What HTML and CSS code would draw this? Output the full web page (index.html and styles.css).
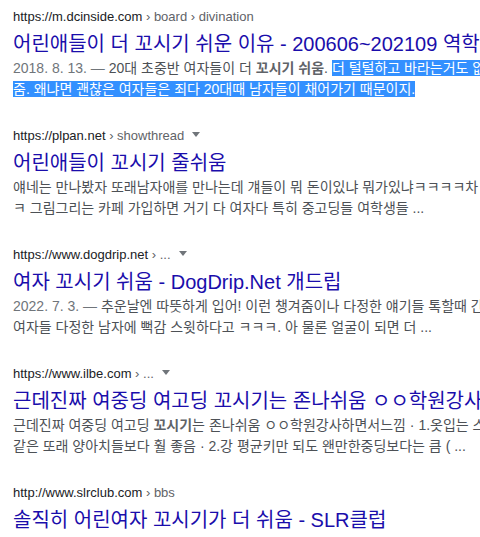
FILE: index.html
```html
<!DOCTYPE html>
<html lang="ko">
<head>
  <meta charset="utf-8">
  <title>꼬시기 쉬움 - 검색</title>
  <link rel="stylesheet" href="styles.css">
</head>
<body>
  <div class="results">

    <div class="result">
      <div class="cite">https://m.dcinside.com<span class="crumb"> › board › divination</span></div>
      <div class="title">어린애들이 더 꼬시기 쉬운 이유 - 200606~202109 역학 갤러리</div>
      <div class="snippet">
        <div class="line"><span class="date">2018. 8. 13. — </span>20대 초중반 여자들이 더 <b>꼬시기 쉬움</b>. <span class="sel">더 털털하고 바라는거도 없고 잘해</span></div>
        <div class="line"><span class="sel">줌. 왜냐면 괜찮은 여자들은 죄다 20대때 남자들이 채어가기 때문이지.</span></div>
      </div>
    </div>

    <div class="result">
      <div class="cite">https://plpan.net<span class="crumb"> › showthread</span><span class="caret"></span></div>
      <div class="title">어린애들이 꼬시기 줄쉬움</div>
      <div class="snippet">
        <div class="line">얘네는 만나봤자 또래남자애를 만나는데 걔들이 뭐 돈이있냐 뭐가있냐ㅋㅋㅋㅋ차 ㅋ</div>
        <div class="line">ㅋ 그림그리는 카페 가입하면 거기 다 여자다 특히 중고딩들 여학생들 ...</div>
      </div>
    </div>

    <div class="result">
      <div class="cite">https://www.dogdrip.net<span class="crumb"> › ...</span><span class="caret"></span></div>
      <div class="title">여자 꼬시기 쉬움 - DogDrip.Net 개드립</div>
      <div class="snippet">
        <div class="line"><span class="date">2022. 7. 3. — </span>추운날엔 따뜻하게 입어! 이런 챙겨줌이나 다정한 얘기들 톡할때 간지</div>
        <div class="line">여자들 다정한 남자에 뻑감 스윗하다고 ㅋㅋㅋ. 아 물론 얼굴이 되면 더 ...</div>
      </div>
    </div>

    <div class="result">
      <div class="cite">https://www.ilbe.com<span class="crumb"> › ...</span><span class="caret"></span></div>
      <div class="title">근데진짜 여중딩 여고딩 꼬시기는 존나쉬움 ㅇㅇ학원강사</div>
      <div class="snippet">
        <div class="line">근데진짜 여중딩 여고딩 <b>꼬시기</b>는 존나쉬움 ㅇㅇ학원강사하면서느낌 · 1.옷입는 스</div>
        <div class="line">같은 또래 양아치들보다 훨 좋음 · 2.강 평균키만 되도 왠만한중딩보다는 큼 ( ...</div>
      </div>
    </div>

    <div class="result">
      <div class="cite">http://www.slrclub.com<span class="crumb"> › bbs</span></div>
      <div class="title">솔직히 어린여자 꼬시기가 더 쉬움 - SLR클럽</div>
    </div>

  </div>
</body>
</html>
```

FILE: styles.css
```css
body {
  background-color: #fff;
  font-family: 'Liberation Sans', Arial, 'Noto Sans CJK KR', sans-serif;
  margin: 0;
  overflow: hidden;
}

.results {
  padding: 7px 0 0 13px;
  width: 640px;
}

.result {
  margin-bottom: 26px;
}

.cite {
  color: #202124;
  font-size: 13px;
  line-height: 20px;
  white-space: nowrap;
}

.crumb {
  color: #5f6368;
}

.caret {
  border-left: 4px solid transparent;
  border-right: 4px solid transparent;
  border-top: 5px solid #70757a;
  display: inline-block;
  margin-left: 8px;
  vertical-align: 3px;
}

.title {
  color: #1a0dab;
  font-size: 20px;
  line-height: 26px;
  padding-top: 4px;
  white-space: nowrap;
}

.snippet {
  color: #4d5156;
  font-size: 14px;
  padding-top: 1px;
}

.line {
  line-height: 21px;
  white-space: nowrap;
}

.date {
  color: #70757a;
}

.snippet b {
  color: #5f6368;
}

.sel {
  background-color: #3390ff;
  color: #fff;
}
```
